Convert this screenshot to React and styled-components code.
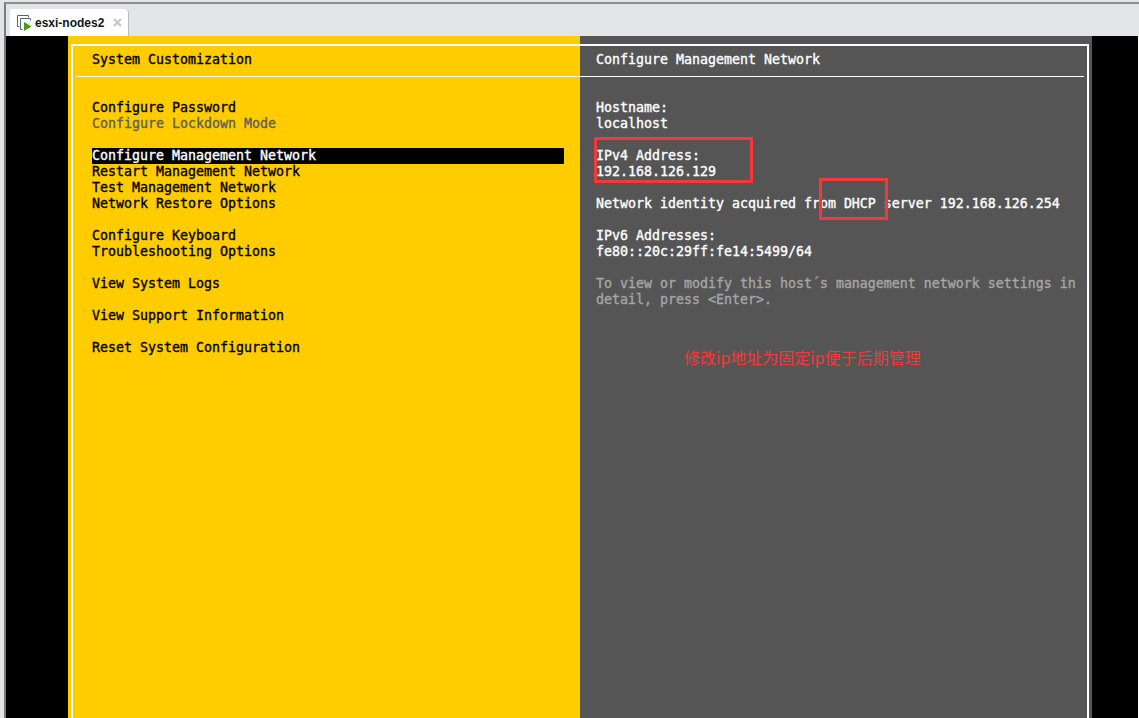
import React from "react";
import styled, { createGlobalStyle } from "styled-components";

const GlobalStyle = createGlobalStyle`
  html, body {
    margin: 0;
    padding: 0;
    background: #fff;
  }
`;

const menuGroups = [
  [{ label: "Configure Password" }, { label: "Configure Lockdown Mode", dim: true }],
  [
    { label: "Configure Management Network", active: true },
    { label: "Restart Management Network" },
    { label: "Test Management Network" },
    { label: "Network Restore Options" },
  ],
  [{ label: "Configure Keyboard" }, { label: "Troubleshooting Options" }],
  [{ label: "View System Logs" }],
  [{ label: "View Support Information" }],
  [{ label: "Reset System Configuration" }],
];

const infoGroups = [
  ["Hostname:", "localhost"],
  ["IPv4 Address:", "192.168.126.129"],
  ["Network identity acquired from DHCP server 192.168.126.254"],
  ["IPv6 Addresses:", "fe80::20c:29ff:fe14:5499/64"],
];

function VmIcon() {
  return (
    <svg width="16" height="17" viewBox="0 0 16 17" fill="none">
      <path d="M12.5 3.5V1.5H1.5V12.5H3.5" stroke="#5b6670" strokeWidth="1" />
      <path d="M14.5 6.5V4.5H4.5V15.5H6.5" stroke="#5b6670" strokeWidth="1" />
      <path d="M8 8L15.5 12.5L8 17Z" fill="#4c9a1c" />
    </svg>
  );
}

function App() {
  return (
    <Page>
      <GlobalStyle />
      <Window>
        <TopBar>
          <Tab>
            <VmIcon />
            <TabLabel>esxi-nodes2</TabLabel>
            <TabClose>
              <svg width="9" height="9" viewBox="0 0 9 9">
                <path d="M1 1L8 8M8 1L1 8" stroke="#c4c6c8" strokeWidth="2.2" />
              </svg>
            </TabClose>
          </Tab>
        </TopBar>
        <Console>
          <Screen>
            <MenuPanel>
              <PanelTitle $side="left">System Customization</PanelTitle>
              <PanelBody>
                {menuGroups.map((group, i) => (
                  <Group key={i}>
                    {group.map((item) => (
                      <MenuItem key={item.label} $dim={item.dim} $active={item.active}>
                        {item.label}
                      </MenuItem>
                    ))}
                  </Group>
                ))}
              </PanelBody>
            </MenuPanel>
            <InfoPanel>
              <PanelTitle $side="right">Configure Management Network</PanelTitle>
              <PanelBody>
                {infoGroups.map((group, i) => (
                  <Group key={i}>
                    {group.map((line) => (
                      <InfoLine key={line}>{line}</InfoLine>
                    ))}
                  </Group>
                ))}
                <Group>
                  <InfoLine $dim>To view or modify this host´s management network settings in</InfoLine>
                  <InfoLine $dim>detail, press &lt;Enter&gt;.</InfoLine>
                </Group>
              </PanelBody>
            </InfoPanel>
            <Frame />
            <RedBox $left={526} $top={101} $width={159} $height={46} />
            <RedBox $left={751} $top={142} $width={69} $height={42} />
            <Annotation>修改ip地址为固定ip便于后期管理</Annotation>
          </Screen>
        </Console>
      </Window>
    </Page>
  );
}

const Page = styled.div`
  width: 1139px;
  height: 718px;
  overflow: hidden;
  box-sizing: border-box;
  padding: 2px 0 0 4px;
  display: flex;
  background: #e3e4e6;
`;

const Window = styled.div`
  flex: 1;
  min-width: 0;
  display: flex;
  flex-direction: column;
  border-top: 2px solid #8e8e8e;
  border-left: 2px solid #7c7c7c;
`;

const TopBar = styled.div`
  height: 32px;
  flex: none;
  display: flex;
  align-items: flex-end;
  padding-left: 4px;
  background: #e3e4e6;
`;

const Tab = styled.div`
  width: 119px;
  height: 27px;
  box-sizing: border-box;
  display: flex;
  align-items: center;
  padding-left: 6px;
  background: #fff;
  border-right: 1px solid #b9bbbe;
  border-top-right-radius: 4px;
  border-top-left-radius: 2px;
`;

const TabLabel = styled.span`
  margin-left: 3px;
  font: bold 12px "Liberation Sans", Arial, sans-serif;
  color: #10161c;
`;

const TabClose = styled.span`
  display: flex;
  margin-left: 9px;
`;

const Console = styled.div`
  flex: 1;
  min-height: 0;
  display: flex;
  padding-left: 62px;
  padding-right: 46px;
  background: #000;
  border-right: 1px solid #fff;
`;

const Screen = styled.div`
  position: relative;
  width: 1024px;
  flex: none;
  display: grid;
  grid-template-columns: 512px 512px;
  overflow: hidden;
  font-family: "DejaVu Sans Mono", "Liberation Mono", monospace;
  font-size: 13.29px;
  -webkit-text-stroke: 0.35px currentColor;
  line-height: 16px;
  white-space: pre;
`;

const MenuPanel = styled.div`
  background: #ffcc00;
  color: #000;
`;

const InfoPanel = styled.div`
  background: #555555;
  color: #fff;
`;

const PanelTitle = styled.div`
  padding: 16px 0 8px 16px;
  margin-left: ${(p) => (p.$side === "left" ? "8px" : "0")};
  margin-right: ${(p) => (p.$side === "right" ? "8px" : "0")};
  border-bottom: 1px solid #fff;
`;

const PanelBody = styled.div`
  padding: 23px 16px 0 24px;
`;

const Group = styled.div`
  margin-bottom: 16px;
`;

const MenuItem = styled.div`
  height: 16px;
  color: ${(p) => (p.$active ? "#fff" : p.$dim ? "#5f5f5f" : "#000")};
  background: ${(p) => (p.$active ? "#000" : "transparent")};
`;

const InfoLine = styled.div`
  height: 16px;
  margin-left: -8px;
  color: ${(p) => (p.$dim ? "#a6a6a6" : "#fff")};
`;

const Frame = styled.div`
  position: absolute;
  left: 3px;
  right: 3px;
  top: 8px;
  bottom: -10px;
  border: 2px solid #fff;
  pointer-events: none;
`;

const RedBox = styled.div`
  position: absolute;
  left: ${(p) => p.$left}px;
  top: ${(p) => p.$top}px;
  width: ${(p) => p.$width}px;
  height: ${(p) => p.$height}px;
  box-sizing: border-box;
  border: 3px solid #f73838;
`;

const Annotation = styled.div`
  position: absolute;
  left: 616px;
  top: 311px;
  font-family: "Noto Sans CJK SC", sans-serif;
  font-size: 16px;
  -webkit-text-stroke: 0;
  line-height: 20px;
  color: #f73838;
`;

export default App;
